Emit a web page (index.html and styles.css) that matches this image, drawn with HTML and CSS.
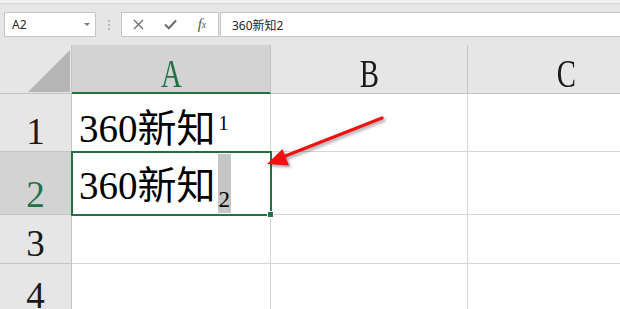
FILE: index.html
```html
<!DOCTYPE html>
<html lang="zh-CN">
<head>
  <meta charset="UTF-8">
  <title>360新知</title>
  <link rel="stylesheet" href="styles.css">
</head>
<body>
  <div class="app">
    <div class="topstrip"></div>

    <!-- Name box + formula bar -->
    <div class="toolbar">
      <div class="namebox"><span>A2</span><span class="caret"></span></div>
      <div class="grip"><i></i><i></i><i></i></div>
      <div class="fbtns">
        <span class="fbtn">
          <svg width="11" height="11" viewBox="0 0 11 11"><path d="M1 1 L10 10 M10 1 L1 10" stroke="#6b6b6b" stroke-width="1.3" fill="none"/></svg>
        </span>
        <span class="fbtn">
          <svg width="13" height="11" viewBox="0 0 13 11"><path d="M1 5.5 L4.8 9.2 L12 1.5" stroke="#6b6b6b" stroke-width="2" fill="none"/></svg>
        </span>
        <span class="fbtn fx"><i>f</i><sub>x</sub></span>
      </div>
      <div class="formula">360新知2</div>
    </div>

    <!-- Sheet -->
    <div class="sheet">
      <div class="hd corner"><div class="tri"></div></div>
      <div class="hd col active"><span class="letter">A</span></div>
      <div class="hd col"><span class="letter">B</span></div>
      <div class="hd col"><span class="letter">C</span></div>

      <div class="hd row">1</div>
      <div class="cell"><span class="val">360新知<span class="sup">1</span></span></div>
      <div class="cell"></div>
      <div class="cell"></div>

      <div class="hd row active">2</div>
      <div class="cell selected"><span class="val">360新知<span class="sub">2</span></span></div>
      <div class="cell"></div>
      <div class="cell"></div>

      <div class="hd row">3</div>
      <div class="cell"></div>
      <div class="cell"></div>
      <div class="cell"></div>

      <div class="hd row">4</div>
      <div class="cell"></div>
      <div class="cell"></div>
      <div class="cell"></div>
    </div>

    <!-- Red annotation arrow -->
    <svg class="arrow" width="620" height="309" viewBox="0 0 620 309">
      <path d="M382 118 L284 156.5" stroke="#f01010" stroke-width="3.2" stroke-linecap="round" fill="none"/>
      <path d="M267 164 L282.4 149 L289 165.5 Z" fill="#f01010"/>
    </svg>
  </div>
</body>
</html>
```

FILE: styles.css
```css
/* Base */
body {
  margin: 0;
  font-family: "Noto Sans", "Noto Sans CJK SC", sans-serif;
  background: #e6e6e6;
}

.app {
  position: relative;
  width: 620px;
  height: 309px;
  overflow: hidden;
}

.topstrip {
  height: 3px;
  background: #f1f1f1;
  border-bottom: 1px solid #d9d9d9;
}

/* Toolbar */
.toolbar {
  display: flex;
  height: 25px;
  padding: 8px 0 8px 4px;
}

.namebox {
  width: 92px;
  box-sizing: border-box;
  display: flex;
  align-items: center;
  justify-content: space-between;
  padding: 0 5px 0 7px;
  background: #fff;
  border: 1px solid #c6c6c6;
  font-size: 12px;
  color: #262626;
}

.caret {
  width: 0;
  height: 0;
  border-left: 3px solid transparent;
  border-right: 3px solid transparent;
  border-top: 3px solid #7a7a7a;
}

.grip {
  width: 25px;
  display: flex;
  flex-direction: column;
  align-items: center;
  justify-content: center;
  gap: 2px;
}

.grip i {
  width: 2px;
  height: 2px;
  background: #b8b8b8;
}

.fbtns {
  width: 98px;
  box-sizing: border-box;
  display: flex;
  background: #fff;
  border: 1px solid #c6c6c6;
}

.fbtn {
  width: 32px;
  display: flex;
  align-items: center;
  justify-content: center;
}

.fx {
  font-family: "Liberation Serif", serif;
  color: #555;
  font-size: 15px;
}

.fx sub {
  font-size: 10px;
  font-style: italic;
  vertical-align: -2px;
}

.formula {
  flex: 1;
  margin-left: 1px;
  display: flex;
  align-items: center;
  padding-left: 11px;
  background: #fff;
  border: 1px solid #c6c6c6;
  border-right: none;
  font-size: 12px;
  color: #262626;
}

/* Sheet grid */
.sheet {
  display: grid;
  grid-template-columns: 72px 199px 197px 197px;
  grid-template-rows: 49px 58px 63px 49px 52px;
  background: #fff;
}

.sheet > div {
  box-sizing: border-box;
  border-right: 1px solid #d6d6d6;
  border-bottom: 1px solid #d6d6d6;
}

.hd {
  background: #e6e6e6;
  font-family: "Liberation Serif", serif;
  color: #1a1a1a;
}

.sheet > .hd {
  border-color: #c4c4c4;
}

.corner {
  display: flex;
  align-items: flex-end;
  justify-content: flex-end;
  padding: 0 1px 1px 0;
}

.tri {
  width: 42px;
  height: 42px;
  background: #b5b5b5;
  clip-path: polygon(100% 0, 100% 100%, 0 100%);
}

.col {
  display: flex;
  justify-content: center;
  align-items: flex-start;
  padding-top: 9px;
  font-size: 40px;
  line-height: 40px;
}

.letter {
  display: inline-block;
  transform: scaleX(0.72);
}

.row {
  display: flex;
  justify-content: center;
  align-items: flex-end;
  padding-bottom: 1px;
  font-size: 37px;
  line-height: 37px;
}

.hd.active {
  background: #d3d3d3;
  color: #217346;
}

.sheet > .col.active {
  border-bottom: 2px solid #217346;
}

/* Cells */
.cell {
  display: flex;
  align-items: flex-end;
  padding: 0 0 2px 7px;
}

.val {
  font-family: "Liberation Serif", "Noto Sans CJK SC", serif;
  font-size: 39px;
  line-height: 40px;
  color: #000;
  white-space: nowrap;
}

.sup {
  margin-left: 3px;
  font-size: 20px;
  line-height: 20px;
  vertical-align: 12px;
}

.sub {
  display: inline-block;
  padding: 34px 1px 2px;
  margin-left: 2px;
  font-size: 23px;
  line-height: 23px;
  vertical-align: -8px;
  background: #c6c6c6;
}

.cell.selected {
  position: relative;
  z-index: 1;
  padding-bottom: 1px;
  outline: 2px solid #217346;
  outline-offset: -1px;
}

.cell.selected::after {
  content: "";
  position: absolute;
  right: -4px;
  bottom: -4px;
  width: 5px;
  height: 5px;
  background: #217346;
  border: 1px solid #fff;
}

/* Annotation */
.arrow {
  position: absolute;
  top: 0;
  left: 0;
  z-index: 2;
  pointer-events: none;
  filter: drop-shadow(2px 2px 1.5px rgba(0, 0, 0, 0.35));
}
```
